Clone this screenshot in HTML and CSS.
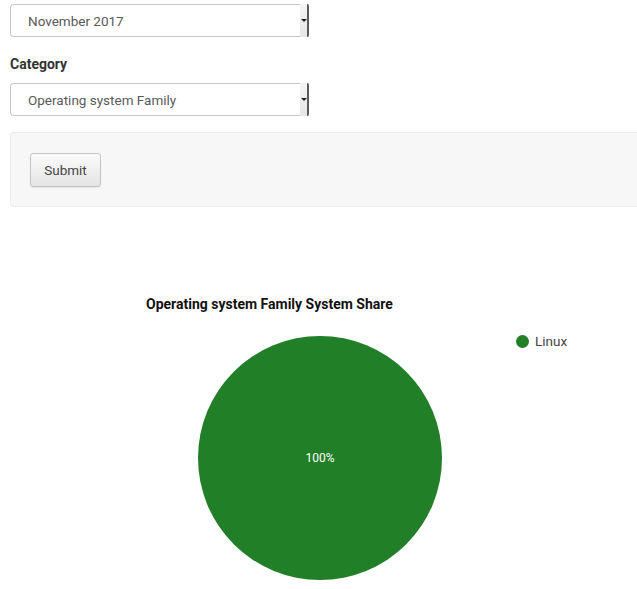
FILE: index.html
```html
<!DOCTYPE html>
<html>
<head>
<meta charset="utf-8">
<link rel="stylesheet" href="styles.css">
</head>
<body>
<div class="page">
  <div class="select">
    <span class="select-text">November 2017</span>
    <span class="select-btn"><span class="arrow"></span></span>
  </div>
  <div class="label">Category</div>
  <div class="select">
    <span class="select-text">Operating system Family</span>
    <span class="select-btn"><span class="arrow"></span></span>
  </div>
  <div class="well">
    <button class="btn">Submit</button>
  </div>
  <div class="chart">
    <div class="chart-title">Operating system Family System Share</div>
    <div class="chart-body">
      <div class="pie"><span class="pie-label">100%</span></div>
      <div class="legend"><span class="dot"></span><span>Linux</span></div>
    </div>
  </div>
</div>
</body>
</html>
```
FILE: styles.css
```css
html, body { margin: 0; padding: 0; background: #fff; }
body { font-family: Roboto, "Liberation Sans", sans-serif; color: #333; overflow: hidden; }
.page { padding: 4px 0 0 10px; }
.select {
  width: 299px; height: 33px; box-sizing: border-box;
  border: 1px solid #c8c8c8; border-right: none; border-radius: 4px 2px 2px 4px;
  display: flex; align-items: center; justify-content: space-between;
  background: #fff;
}
.select-text { padding-left: 17px; font-size: 13.5px; color: #5a5a5a; }
.select-btn {
  width: 9px; height: 33px; box-sizing: border-box; margin-top: -1px; margin-bottom: -1px;
  background: linear-gradient(#f4f4f4, #e6e6e6);
  border-right: 2px solid #5a5a5a; border-radius: 0 2px 2px 0;
  display: flex; align-items: center; justify-content: center;
}
.arrow { width: 0; height: 0; border-left: 3px solid transparent; border-right: 3px solid transparent; border-top: 3px solid #222; margin-left: 1px; }
.label { font-weight: bold; font-size: 14px; margin: 19px 0 11px; color: #333; }
.well {
  margin-top: 16px; height: 75px; box-sizing: border-box;
  background: #f7f7f7; border: 1px solid #ececec; border-right: none; border-radius: 4px 0 0 4px;
  padding: 20px 0 0 19px;
}
.btn {
  font-family: inherit; font-size: 13.5px; color: #444;
  width: 71px; height: 34px; border: 1px solid #c4c4c4; border-radius: 3px;
  background: linear-gradient(#fbfbfb, #e4e4e4);
  box-shadow: 0 1px 1px rgba(0,0,0,0.08);
  padding: 0;
}
.chart { margin-top: 89px; position: relative; }
.chart-title { font-weight: bold; font-size: 14px; color: #111; margin-left: 136px; }
.chart-body { display: flex; position: relative; margin-top: 24px; }
.pie {
  margin-left: 188px; width: 244px; height: 244px; border-radius: 50%;
  background: #217f28; display: flex; align-items: center; justify-content: center;
}
.pie-label { color: #fff; font-size: 12px; }
.legend { position: absolute; left: 506px; top: -3px; display: flex; align-items: center; gap: 6px; font-size: 13.5px; color: #444; }
.dot { width: 13px; height: 13px; border-radius: 50%; background: #217f28; }
```
